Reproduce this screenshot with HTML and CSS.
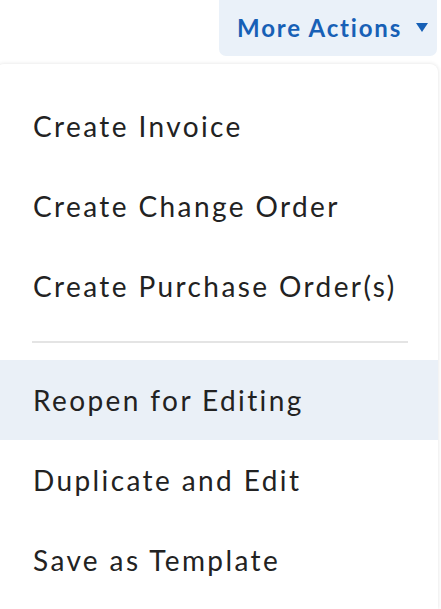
FILE: index.html
```html
<!DOCTYPE html>
<html lang="en">
<head>
    <meta charset="UTF-8">
    <meta name="viewport" content="width=device-width, initial-scale=1.0">
    <title>More Actions</title>
    <link rel="stylesheet" href="styles.css">
</head>
<body>
    <div class="toolbar">
        <button class="actions-button">
            <span class="actions-label">More Actions</span>
            <svg class="caret" width="12" height="9" viewBox="0 0 12 9"><path d="M0 0 H12 L6 9 Z" fill="#1760b6"/></svg>
        </button>
    </div>
    <div class="actions-menu">
        <div class="menu-item">Create Invoice</div>
        <div class="menu-item">Create Change Order</div>
        <div class="menu-item">Create Purchase Order(s)</div>
        <div class="menu-divider"></div>
        <div class="menu-item active">Reopen for Editing</div>
        <div class="menu-item">Duplicate and Edit</div>
        <div class="menu-item">Save as Template</div>
    </div>
</body>
</html>
```

FILE: styles.css
```css
body {
    font-family: Lato, 'Open Sans', sans-serif;
    background: #fff;
    margin: 0;
    padding: 0;
    height: 609px;
    overflow: hidden;
}
.toolbar {
    display: flex;
    justify-content: flex-end;
    padding-right: 4px;
}
.actions-button {
    display: flex;
    align-items: center;
    gap: 14px;
    height: 56px;
    padding: 0 9px 0 18px;
    background-color: #eaf1f9;
    color: #1760b6;
    border: none;
    border-radius: 0 0 7px 7px;
    font-family: inherit;
    font-size: 24px;
    font-weight: 700;
    cursor: pointer;
}
.actions-label {
    letter-spacing: 1.8px;
    margin-top: -2px;
}
.caret {
    margin-top: -1px;
}
.actions-menu {
    margin: 8px 3px 0 -4px;
    padding-top: 22px;
    background-color: #fff;
    border-radius: 8px 8px 0 0;
    box-shadow: 0 0 4px rgba(0, 0, 0, 0.12);
    height: 523px;
}
.menu-item {
    height: 80px;
    display: flex;
    align-items: center;
    padding-left: 37px;
    font-size: 28px;
    color: #222;
    letter-spacing: 2.4px;
}
.menu-item.active {
    background-color: #eaf0f7;
}
.menu-divider {
    height: 2px;
    background-color: #e4e4e4;
    margin: 15px 30px 17px 36px;
}
```
